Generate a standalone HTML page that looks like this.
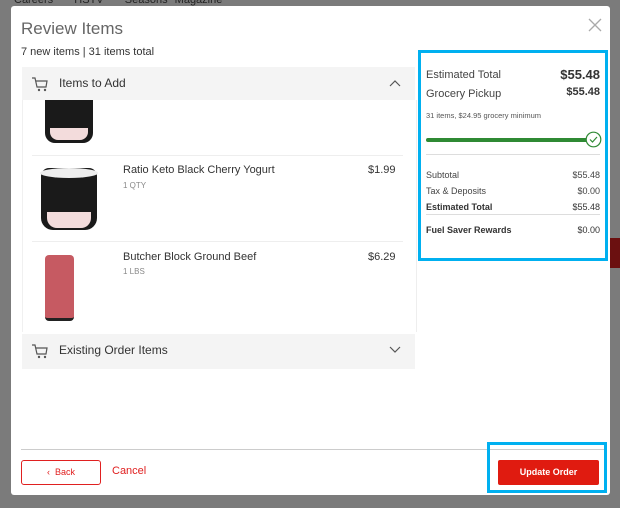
<!DOCTYPE html>
<html><head><style>
body{margin:0;width:620px;height:508px;overflow:hidden;background:#7b7b7b;font-family:"Liberation Sans",sans-serif;position:relative}
.a{position:absolute}
.t{color:#333;font-size:11px}
</style></head><body>
<div class="a" style="left:14px;top:-6px;font-size:11px;color:#222;word-spacing:4px">Careers &nbsp; HSTV &nbsp; Seasons Magazine</div>
<div class="a" style="left:610px;top:238px;width:10px;height:30px;background:#6b1010"></div>
<div class="a" style="left:11px;top:6px;width:599px;height:489px;background:#fff;border-radius:3px"></div>
<div class="a" style="left:21px;top:19px;font-size:17px;color:#666">Review Items</div>
<div class="a" style="left:21px;top:46px;font-size:11px;color:#333">7 new items | 31 items total</div>
<svg class="a" style="left:588px;top:18px" width="14" height="14"><path d="M1 1L13 13M13 1L1 13" stroke="#aaa" stroke-width="1.3"/></svg>
<div class="a" style="left:22px;top:67px;width:393px;height:33px;background:#f4f4f4"></div>
<svg class="a" style="left:31px;top:76px" width="18" height="16"><path d="M1 2h3l2 9h9l1-6H5" fill="none" stroke="#555" stroke-width="1.2"/><circle cx="8" cy="14" r="1.2" fill="#555"/><circle cx="14" cy="14" r="1.2" fill="#555"/></svg>
<div class="a t" style="left:59px;top:76px;font-size:12px">Items to Add</div>
<svg class="a" style="left:389px;top:79px" width="12" height="8"><path d="M1 7L6 2L11 7" fill="none" stroke="#555" stroke-width="1.2"/></svg>
<div class="a" style="left:22px;top:100px;width:393px;height:232px;background:#fff;border-left:1px solid #f0f0f0;border-right:1px solid #eee"></div>
<div class="a" style="left:45px;top:100px;width:48px;height:43px;background:#1a1a1a;border-radius:0 0 10px 10px"></div>
<div class="a" style="left:50px;top:128px;width:38px;height:12px;background:#f3dcdc;border-radius:0 0 8px 8px"></div>
<div class="a" style="left:32px;top:155px;width:371px;height:1px;background:#eee"></div>
<div class="a" style="left:41px;top:168px;width:56px;height:62px;background:#1a1a1a;border-radius:8px 8px 12px 12px"></div>
<div class="a" style="left:40px;top:168px;width:58px;height:10px;background:#eee;border-radius:50%"></div>
<div class="a" style="left:47px;top:212px;width:44px;height:16px;background:#f3dcdc;border-radius:0 0 10px 10px"></div>
<div class="a t" style="left:123px;top:164px">Ratio Keto Black Cherry Yogurt</div>
<div class="a" style="left:123px;top:181px;font-size:8px;color:#888">1 QTY</div>
<div class="a t" style="left:368px;top:164px">$1.99</div>
<div class="a" style="left:32px;top:241px;width:371px;height:1px;background:#eee"></div>
<div class="a" style="left:45px;top:255px;width:29px;height:63px;background:#c65a62;border-radius:4px;border-bottom:3px solid #222"></div>
<div class="a t" style="left:123px;top:251px">Butcher Block Ground Beef</div>
<div class="a" style="left:123px;top:267px;font-size:8px;color:#888">1 LBS</div>
<div class="a t" style="left:368px;top:251px">$6.29</div>
<div class="a" style="left:22px;top:334px;width:393px;height:35px;background:#f4f4f4"></div>
<svg class="a" style="left:31px;top:343px" width="18" height="16"><path d="M1 2h3l2 9h9l1-6H5" fill="none" stroke="#555" stroke-width="1.2"/><circle cx="8" cy="14" r="1.2" fill="#555"/><circle cx="14" cy="14" r="1.2" fill="#555"/></svg>
<div class="a t" style="left:59px;top:343px;font-size:12px">Existing Order Items</div>
<svg class="a" style="left:389px;top:346px" width="12" height="8"><path d="M1 1L6 6L11 1" fill="none" stroke="#555" stroke-width="1.2"/></svg>
<div class="a" style="left:418px;top:50px;width:184px;height:205px;border:3px solid #00b0f0"></div>
<div class="a" style="left:426px;top:69px;font-size:11px;color:#444">Estimated Total</div>
<div class="a" style="right:20px;top:67px;font-size:13px;font-weight:bold;color:#333">$55.48</div>
<div class="a" style="left:426px;top:88px;font-size:11px;color:#444">Grocery Pickup</div>
<div class="a" style="right:20px;top:86px;font-size:11px;font-weight:bold;color:#333">$55.48</div>
<div class="a" style="left:426px;top:111px;font-size:7.5px;color:#555">31 items, $24.95 grocery minimum</div>
<div class="a" style="left:426px;top:138px;width:162px;height:4px;background:#2f8a34;border-radius:2px"></div>
<svg class="a" style="left:585px;top:131px" width="17" height="17"><circle cx="8.5" cy="8.5" r="7.3" fill="#fff" stroke="#2f8a34" stroke-width="1.2"/><path d="M5 8.5l2.5 2.5L12 6" fill="none" stroke="#2f8a34" stroke-width="1.2"/></svg>
<div class="a" style="left:426px;top:154px;width:174px;height:1px;background:#ddd"></div>
<div class="a" style="left:426px;top:170px;font-size:9px;color:#444">Subtotal</div><div class="a" style="right:20px;top:170px;font-size:9px;color:#444">$55.48</div>
<div class="a" style="left:426px;top:186px;font-size:9px;color:#444">Tax &amp; Deposits</div><div class="a" style="right:20px;top:186px;font-size:9px;color:#444">$0.00</div>
<div class="a" style="left:426px;top:202px;font-size:9px;color:#333;font-weight:bold">Estimated Total</div><div class="a" style="right:20px;top:202px;font-size:9px;color:#333">$55.48</div>
<div class="a" style="left:426px;top:214px;width:174px;height:1px;background:#ddd"></div>
<div class="a" style="left:426px;top:225px;font-size:9px;color:#333;font-weight:bold">Fuel Saver Rewards</div><div class="a" style="right:20px;top:225px;font-size:9px;color:#333">$0.00</div>
<div class="a" style="left:21px;top:449px;width:585px;height:1px;background:#ccc"></div>
<div class="a" style="left:21px;top:460px;width:78px;height:23px;border:1px solid #e02020;border-radius:3px;color:#e02020;font-size:9px;line-height:23px;text-align:center">&lsaquo;&nbsp; Back</div>
<div class="a" style="left:112px;top:465px;color:#e02020;font-size:11px">Cancel</div>
<div class="a" style="left:487px;top:442px;width:114px;height:45px;border:3px solid #00b0f0"></div>
<div class="a" style="left:498px;top:460px;width:101px;height:25px;background:#e01b10;border-radius:2px;color:#fff;font-size:9px;font-weight:bold;line-height:25px;text-align:center">Update Order</div>
</body></html>
